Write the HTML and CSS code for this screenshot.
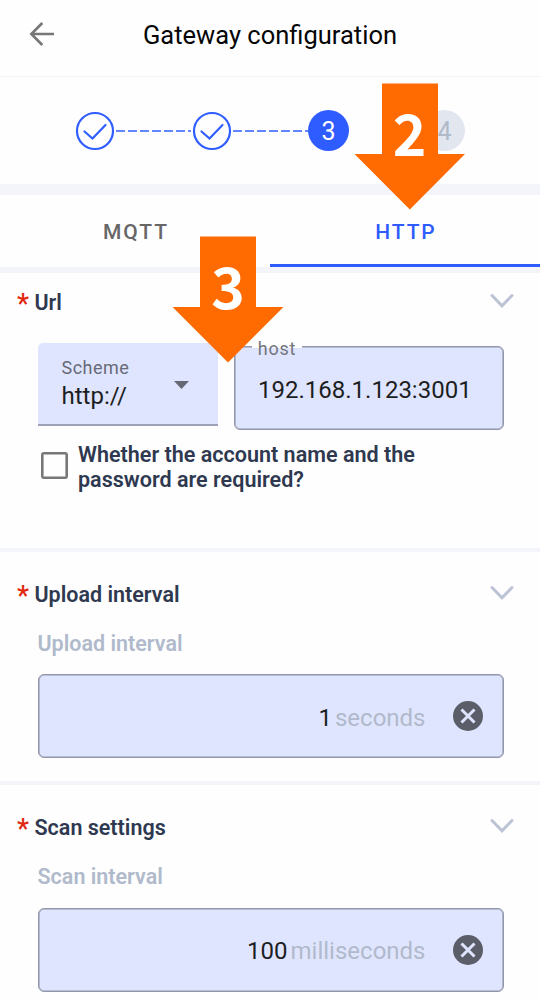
FILE: index.html
```html
<!DOCTYPE html>
<html lang="en">
<head>
<meta charset="utf-8">
<title>Gateway configuration</title>
<link rel="stylesheet" href="styles.css">
</head>
<body>
<header class="topbar">
  <svg class="back" width="26" height="26" viewBox="0 0 26 26"><path d="M25 13H2.5M13.3 2 2.3 13l11 11"/></svg>
  <h1>Gateway configuration</h1>
</header>

<nav class="stepper">
  <svg class="ring" width="42" height="42" viewBox="0 0 42 42"><circle cx="21" cy="21" r="18"/><path d="M10.500 21.500l8 7L31.500 15"/></svg>
  <svg class="dash" viewBox="0 0 75 2"><path d="M0 1H75"/></svg>
  <svg class="ring" width="42" height="42" viewBox="0 0 42 42"><circle cx="21" cy="21" r="18"/><path d="M10.500 21.500l8 7L31.500 15"/></svg>
  <svg class="dash" viewBox="0 0 75 2"><path d="M0 1H75"/></svg>
  <span class="step current">3</span>
  <span class="step next">4</span>
</nav>

<div class="tabs">
  <div class="tab">MQTT</div>
  <div class="tab active">HTTP</div>
</div>

<main>
  <section class="card url">
    <div class="head"><span class="star">*</span><h2>Url</h2><svg class="chevron" width="24" height="16" viewBox="0 0 24 16"><path d="M2 2.500 12 12.800 22 2.500"/></svg></div>
    <div class="row">
      <div class="select">
        <div><div class="caption">Scheme</div><div class="value">http://</div></div>
        <svg width="15" height="8" viewBox="0 0 15 8"><path d="M0 0H15L7.500 8z"/></svg>
      </div>
      <div class="host"><span class="legend">host</span><span class="value">192.168.1.123:3001</span></div>
    </div>
    <label class="check"><span class="box"></span><span>Whether the account name and the<br>password are required?</span></label>
  </section>

  <section class="card upload">
    <div class="head"><span class="star">*</span><h2>Upload interval</h2><svg class="chevron" width="24" height="16" viewBox="0 0 24 16"><path d="M2 2.500 12 12.800 22 2.500"/></svg></div>
    <div class="label">Upload interval</div>
    <div class="field"><span class="value">1</span><span class="unit">seconds</span><svg class="clear" width="30" height="30" viewBox="0 0 30 30"><circle cx="15" cy="15" r="15"/><path d="M8.500 8.500l13 13M21.500 8.500l-13 13"/></svg></div>
  </section>

  <section class="card scan">
    <div class="head"><span class="star">*</span><h2>Scan settings</h2><svg class="chevron" width="24" height="16" viewBox="0 0 24 16"><path d="M2 2.500 12 12.800 22 2.500"/></svg></div>
    <div class="label">Scan interval</div>
    <div class="field"><span class="value">100</span><span class="unit">milliseconds</span><svg class="clear" width="30" height="30" viewBox="0 0 30 30"><circle cx="15" cy="15" r="15"/><path d="M8.500 8.500l13 13M21.500 8.500l-13 13"/></svg></div>
  </section>
</main>

<svg class="arrow two" width="111" height="127" viewBox="0 0 111 127"><path d="M28 .5h56V71H111L55.800 126.500.5 71H28z"/><text x="55.500" y="72.500">2</text></svg>
<svg class="arrow three" width="112" height="127" viewBox="0 0 112 127"><path d="M28 .5h56V71H111.500L56 126.500.5 71H28z"/><text x="56" y="72.500">3</text></svg>
</body>
</html>
```
FILE: styles.css
```css
* { box-sizing: border-box; }
body {
  margin: 0;
  position: relative;
  width: 540px;
  height: 999px;
  overflow: hidden;
  background: #fefeff;
  font-family: Roboto, sans-serif;
  color: #1c1e22;
}
h1, h2 { margin: 0; }
svg { display: block; flex: none; }
path { fill: none; }

.topbar {
  height: 77px;
  display: flex;
  align-items: flex-start;
  border-bottom: 1px solid #f1f3f9;
}
.back { margin: 21px 0 0 29px; }
.back path { stroke: #777; stroke-width: 2.6; }
h1 {
  margin: 20px 0 0 88px;
  font-size: 25.5px;
  line-height: 30px;
  font-weight: 400;
  color: #060606;
}

.stepper {
  height: 107px;
  display: flex;
  align-items: center;
  padding-left: 74px;
}
.ring circle, .ring path { fill: none; stroke: #315eff; stroke-width: 2.2; stroke-linecap: round; }
.dash { width: 75px; height: 2px; }
.dash path { stroke: #315eff; stroke-width: 1.5; stroke-dasharray: 9 3; }
.step {
  width: 41px;
  height: 41px;
  border-radius: 50%;
  font-size: 25px;
  line-height: 43px;
  text-align: center;
}
.current { background: #2f5cff; color: #fff; }
.next { margin-left: 75px; background: #e2e6ef; color: #b0bac9; }

.tabs {
  display: flex;
  height: 89px;
  border-top: 11px solid #f4f5fa;
  border-bottom: 6px solid #f4f5fa;
}
.tab {
  flex: 1;
  padding-left: 2px;
  line-height: 74px;
  text-align: center;
  font-size: 21px;
  font-weight: 500;
  letter-spacing: 1.9px;
  color: #666;
}
.active { color: #2f5cff; border-bottom: 3px solid #2f5cff; }

.card { border-bottom: 4px solid #f4f5fa; padding: 16px 36px 0 37.5px; }
.url { height: 279px; }
.upload { height: 233px; padding-top: 29px; }
.scan { height: 214px; border: 0; padding-top: 29px; }
.head { display: flex; height: 28px; margin: 0 -10px 0 -20.5px; }
.star { width: 17.500px; font-size: 27px; line-height: 31px; color: #e2270f; font-weight: 500; }
h2 { flex: 1; font-size: 21.500px; line-height: 28px; font-weight: 600; color: #2e3950; }
.chevron { margin-top: 4px; }
.chevron path { stroke: #bcc3d5; stroke-width: 3; stroke-linecap: round; }

.row { display: flex; gap: 16.500px; margin-top: 26px; align-items: flex-start; }
.select {
  width: 180px;
  height: 83px;
  padding: 12px 29px 0 24px;
  display: flex;
  justify-content: space-between;
  background: #e0e5ff;
  border-bottom: 2px solid #9da2b8;
  border-radius: 5px 5px 0 0;
}
.select svg { margin-top: 26px; }
.select svg path { fill: #666873; }
.caption { font-size: 18px; line-height: 26px; letter-spacing: .5px; color: #676a77; }
.value { font-size: 24px; line-height: 30px; color: #1c1e22; }
.host {
  position: relative;
  width: 270px;
  height: 84px;
  margin-top: 3px;
  padding: 28px 0 0 23px;
  background: #e0e5ff;
  border: 1px solid #9297ab;
  box-shadow: inset 0 0 0 .6px #9297ab;
  border-radius: 6px;
}
.legend {
  position: absolute;
  left: 17px;
  top: -11px;
  width: 50px;
  height: 26px;
  text-align: center;
  font-size: 18px;
  line-height: 26px;
  letter-spacing: .8px;
  color: #73767b;
  background: linear-gradient(#fefeff 12px, #e0e5ff 12px);
}
.check {
  display: flex;
  margin: 12px 0 0 3px;
  font-size: 21.550px;
  line-height: 25px;
  font-weight: 600;
  color: #2e3950;
}
.box { width: 27px; height: 27px; margin: 10px 10.500px 0 0; border: 2px solid #777; box-shadow: inset 0 0 0 .6px #777; border-radius: 3px; }

.label { margin-top: 21px; font-size: 21.500px; line-height: 28px; font-weight: 600; color: #b0bacb; }
.field {
  display: flex;
  align-items: center;
  justify-content: flex-end;
  width: 466px;
  height: 84px;
  margin-top: 16px;
  padding: 0 20px 0 0;
  background: #e0e5ff;
  border: 1px solid #9297ab;
  box-shadow: inset 0 0 0 .6px #9297ab;
  border-radius: 6px;
}
.scan .field { margin-top: 17px; }
.field .value, .unit { padding-top: 3px; }
.scan .value, .scan .unit { padding-top: 1px; }
.unit { margin-left: 3px; font-size: 24px; line-height: 30px; color: #b0bacb; }
.clear { margin-left: 27px; }
.clear circle { fill: #5b5d68; }
.clear path { stroke: #e0e5ff; stroke-width: 3; }

.arrow { position: absolute; }
.arrow path { fill: #ff6b00; }
.arrow text { font: 700 57px "Noto Sans CJK SC", sans-serif; fill: #fff; text-anchor: middle; }
.two { left: 354px; top: 83px; }
.three { left: 172px; top: 236px; }
```
